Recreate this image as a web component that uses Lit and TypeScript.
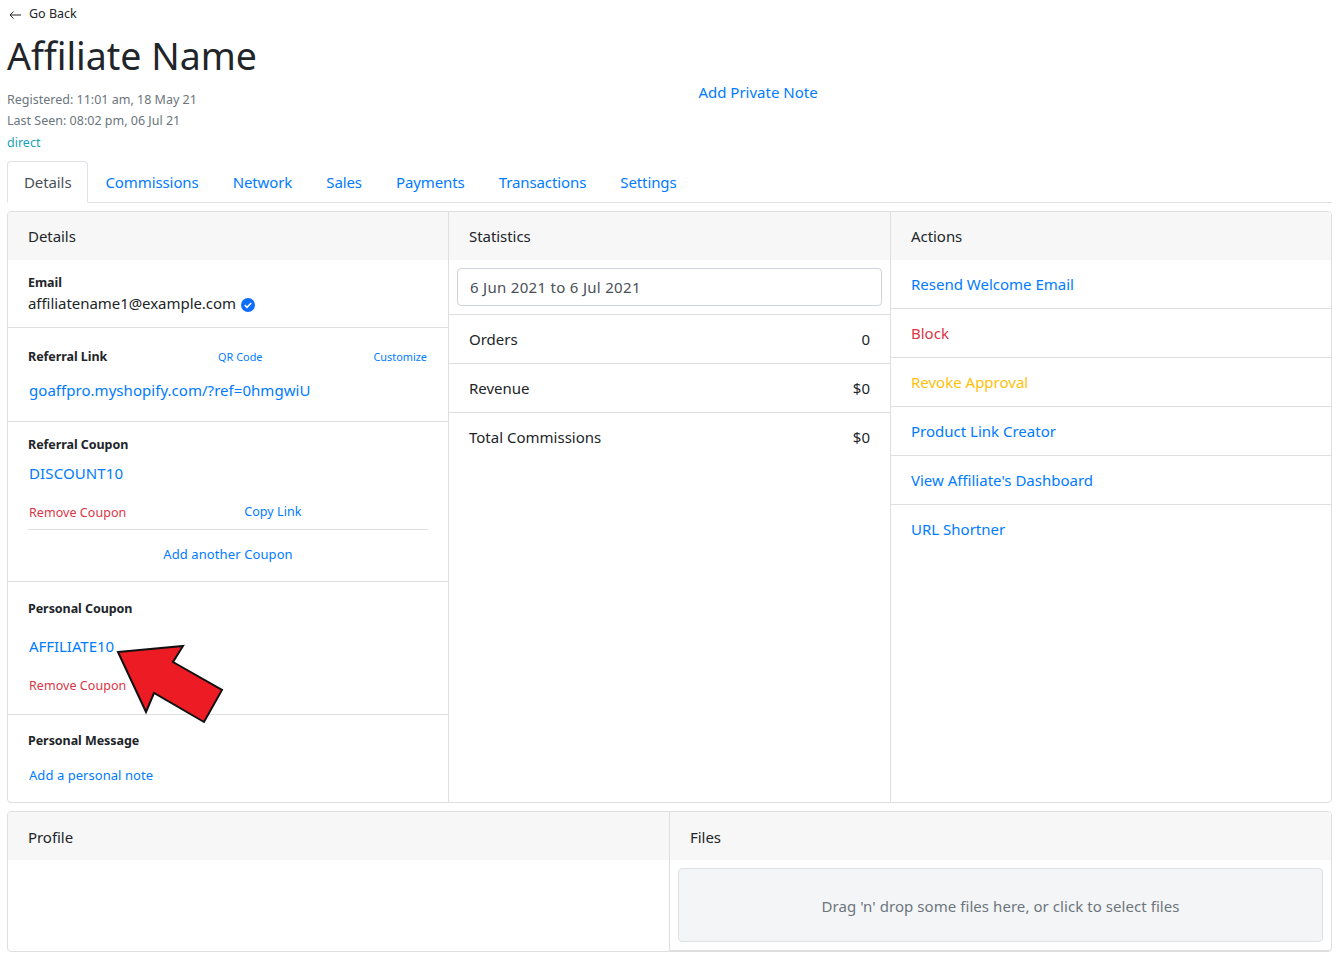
import { LitElement, css, html } from "lit";
import { customElement } from "lit/decorators.js";

const actions = [
  { label: "Resend Welcome Email", tone: "" },
  { label: "Block", tone: "danger" },
  { label: "Revoke Approval", tone: "warning" },
  { label: "Product Link Creator", tone: "" },
  { label: "View Affiliate's Dashboard", tone: "" },
  { label: "URL Shortner", tone: "" },
];

const tabs = ["Commissions", "Network", "Sales", "Payments", "Transactions", "Settings"];

@customElement("app-root")
export class AppRoot extends LitElement {
  static styles = css`
    :host {
      display: block;
      position: relative;
      height: 957px;
      overflow: hidden;
      padding: 0 5px 0 7px;
      box-sizing: border-box;
      background: #fff;
      color: #212529;
      font-family: "Noto Sans", "Open Sans", sans-serif;
      font-size: 15px;
      line-height: 24px;
    }

    * {
      box-sizing: border-box;
    }

    a {
      color: #007bff;
      text-decoration: none;
    }

    .danger {
      color: #dc3545;
    }

    .warning {
      color: #ffc107;
    }

    .back {
      display: flex;
      align-items: center;
      gap: 8px;
      height: 27px;
      padding-left: 2px;
      font-size: 12.5px;
    }

    .back svg {
      margin-top: 3px;
    }

    .head {
      display: grid;
      grid-template-columns: 177px 1fr;
      height: 134px;
    }

    h1 {
      margin: 0;
      height: 62px;
      font-size: 37.5px;
      font-weight: 400;
      line-height: 58px;
      white-space: nowrap;
    }

    .meta {
      font-size: 12.5px;
      line-height: 21.4px;
      color: #6c757d;
      white-space: nowrap;
    }

    .meta .source {
      color: #17a2b8;
    }

    .note {
      padding-top: 53px;
      text-align: center;
    }

    .tabs {
      display: flex;
      height: 42px;
      border-bottom: 1px solid #dee2e6;
      letter-spacing: -0.1px;
    }

    .tabs > * {
      padding: 9px 17px;
      height: 42px;
    }

    .tabs .active {
      color: #495057;
      background: #fff;
      border: 1px solid #dee2e6;
      border-bottom-color: #fff;
      border-radius: 4px 4px 0 0;
      padding: 8px 16px;
    }

    .card {
      display: grid;
      margin-top: 8px;
      border: 1px solid #dfdfdf;
      border-radius: 4px;
      overflow: hidden;
    }

    .main {
      grid-template-columns: 440px 442px 1fr;
      height: 592px;
    }

    .bottom {
      grid-template-columns: 661px 1fr;
      height: 141px;
    }

    .col + .col {
      border-left: 1px solid #dfdfdf;
    }

    .col-head {
      height: 48px;
      padding: 12px 20px;
      background: #f7f7f7;
      letter-spacing: -0.05px;
    }

    .bottom .col-head {
      padding-top: 13px;
    }

    .section {
      padding: 0 20px;
      border-bottom: 1px solid #dfdfdf;
    }

    .label {
      font-size: 12.5px;
      font-weight: 700;
      line-height: 20px;
      letter-spacing: -0.06px;
    }

    .split {
      display: flex;
      justify-content: space-between;
      align-items: center;
      padding-right: 1px;
    }

    .tiny {
      font-size: 10.9px;
    }

    .value {
      display: block;
      padding-left: 1px;
    }

    .verified {
      vertical-align: -3px;
      margin-left: 1px;
    }

    .email {
      height: 68px;
      padding-top: 13px;
    }

    .email .line {
      margin-top: -1px;
      line-height: 22px;
      letter-spacing: -0.05px;
    }

    .link {
      height: 94px;
      padding-top: 17px;
    }

    .link .value {
      margin-top: 9px;
      letter-spacing: 0.04px;
    }

    .coupon {
      height: 160px;
      padding-top: 13px;
    }

    .coupon .value {
      margin-top: 6px;
      letter-spacing: 0.12px;
    }

    .coupon-actions {
      display: flex;
      gap: 118px;
      height: 34px;
      margin-top: 11px;
      padding-left: 1px;
      align-items: center;
      border-bottom: 1px solid #dfdfdf;
      font-size: 12.5px;
      letter-spacing: 0.05px;
    }

    .coupon-actions .mid {
      margin-bottom: 2px;
    }

    .add {
      padding-top: 12px;
      text-align: center;
      font-size: 13px;
      letter-spacing: 0.1px;
    }

    .personal {
      height: 133px;
      padding-top: 17px;
    }

    .personal .value {
      margin-top: 15px;
      letter-spacing: -0.05px;
    }

    .personal .remove {
      display: block;
      margin-top: 16px;
      padding-left: 1px;
      font-size: 12.5px;
      letter-spacing: 0.05px;
    }

    .message {
      padding-top: 16px;
      border-bottom: 0;
    }

    .message a {
      display: block;
      margin-top: 12px;
      padding-left: 1px;
      font-size: 13px;
      letter-spacing: 0.05px;
    }

    .range {
      height: 55px;
      padding: 8px;
      border-bottom: 1px solid #dfdfdf;
    }

    .range div {
      height: 38px;
      padding: 6px 12px;
      border: 1px solid #ced4da;
      border-radius: 4px;
      color: #495057;
      letter-spacing: 0.3px;
    }

    .row {
      display: flex;
      justify-content: space-between;
      align-items: center;
      height: 49px;
      padding: 0 20px;
      border-bottom: 1px solid #dfdfdf;
    }

    .row.last {
      border-bottom-color: transparent;
    }

    .actions .row:first-of-type {
      height: 48px;
    }

    .drop-wrap {
      padding: 8px;
      border-bottom: 1px solid #dfdfdf;
      height: 91px;
    }

    .drop {
      display: flex;
      align-items: center;
      justify-content: center;
      height: 74px;
      padding-top: 2px;
      background: #f4f5f7;
      border: 1px solid #dee2e6;
      border-radius: 4px;
      color: #6c757d;
      letter-spacing: 0.06px;
    }

    .pointer {
      position: absolute;
      left: 110px;
      top: 640px;
    }
  `;

  render() {
    return html`
      <div class="back">
        <svg width="12" height="10" viewBox="0 0 12 10" fill="none" stroke="#212529" stroke-width="1">
          <path d="M12 5H1M4.5 1.5 1 5l3.5 3.5" />
        </svg>
        <span>Go Back</span>
      </div>
      <div class="head">
        <div>
          <h1>Affiliate Name</h1>
          <div class="meta">
            <div>Registered: 11:01 am, 18 May 21</div>
            <div>Last Seen: 08:02 pm, 06 Jul 21</div>
            <div class="source">direct</div>
          </div>
        </div>
        <a class="note" href="#">Add Private Note</a>
      </div>
      <nav class="tabs">
        <span class="active">Details</span>
        ${tabs.map((tab) => html`<a href="#">${tab}</a>`)}
      </nav>

      <div class="card main">
        <div class="col">
          <div class="col-head">Details</div>
          <div class="section email">
            <div class="label">Email</div>
            <div class="line">
              affiliatename1@example.com
              <svg class="verified" width="14" height="14" viewBox="0 0 14 14">
                <circle cx="7" cy="7" r="7" fill="#0d6efd" />
                <path d="M3.8 7.2 6 9.3l4.2-4.3" fill="none" stroke="#fff" stroke-width="1.6" />
              </svg>
            </div>
          </div>
          <div class="section link">
            <div class="split">
              <span class="label">Referral Link</span>
              <a class="tiny" href="#">QR Code</a>
              <a class="tiny" href="#">Customize</a>
            </div>
            <a class="value" href="#">goaffpro.myshopify.com/?ref=0hmgwiU</a>
          </div>
          <div class="section coupon">
            <div class="label">Referral Coupon</div>
            <a class="value" href="#">DISCOUNT10</a>
            <div class="coupon-actions">
              <a class="danger" href="#">Remove Coupon</a>
              <a class="mid" href="#">Copy Link</a>
            </div>
            <div class="add"><a href="#">Add another Coupon</a></div>
          </div>
          <div class="section personal">
            <div class="label">Personal Coupon</div>
            <a class="value" href="#">AFFILIATE10</a>
            <a class="remove danger" href="#">Remove Coupon</a>
          </div>
          <div class="section message">
            <div class="label">Personal Message</div>
            <a href="#">Add a personal note</a>
          </div>
        </div>

        <div class="col">
          <div class="col-head">Statistics</div>
          <div class="range"><div>6 Jun 2021 to 6 Jul 2021</div></div>
          <div class="row"><span>Orders</span><span>0</span></div>
          <div class="row"><span>Revenue</span><span>$0</span></div>
          <div class="row last"><span>Total Commissions</span><span>$0</span></div>
        </div>

        <div class="col actions">
          <div class="col-head">Actions</div>
          ${actions.map(
            (item, index) => html`
              <div class="row ${index === actions.length - 1 ? "last" : ""}">
                <a class=${item.tone} href="#">${item.label}</a>
              </div>
            `,
          )}
        </div>
      </div>

      <div class="card bottom">
        <div class="col">
          <div class="col-head">Profile</div>
        </div>
        <div class="col">
          <div class="col-head">Files</div>
          <div class="drop-wrap">
            <div class="drop">Drag 'n' drop some files here, or click to select files</div>
          </div>
        </div>
      </div>

      <svg class="pointer" width="120" height="90" viewBox="110 640 120 90">
        <path
          d="M118 652 183 646 173 662 222 690 204 722 154 693 146 712Z"
          fill="#ed1c24"
          stroke="#111"
          stroke-width="2"
          stroke-linejoin="miter"
        />
      </svg>
    `;
  }
}
